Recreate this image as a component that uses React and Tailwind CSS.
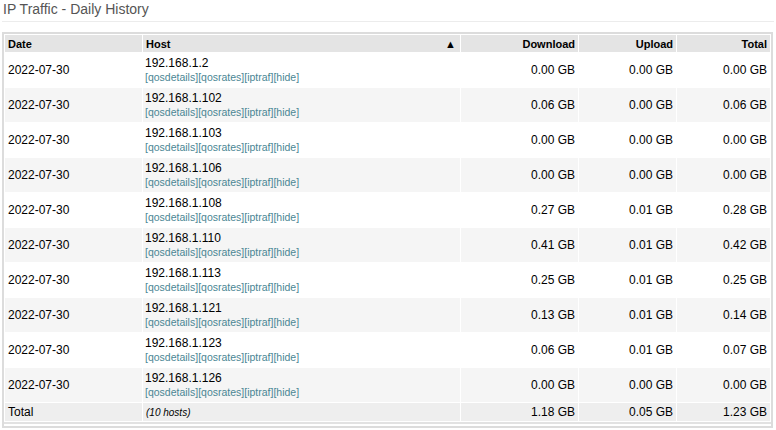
import React from 'react';

const rows = [
  { date: '2022-07-30', host: '192.168.1.2', down: '0.00 GB', up: '0.00 GB', total: '0.00 GB' },
  { date: '2022-07-30', host: '192.168.1.102', down: '0.06 GB', up: '0.00 GB', total: '0.06 GB' },
  { date: '2022-07-30', host: '192.168.1.103', down: '0.00 GB', up: '0.00 GB', total: '0.00 GB' },
  { date: '2022-07-30', host: '192.168.1.106', down: '0.00 GB', up: '0.00 GB', total: '0.00 GB' },
  { date: '2022-07-30', host: '192.168.1.108', down: '0.27 GB', up: '0.01 GB', total: '0.28 GB' },
  { date: '2022-07-30', host: '192.168.1.110', down: '0.41 GB', up: '0.01 GB', total: '0.42 GB' },
  { date: '2022-07-30', host: '192.168.1.113', down: '0.25 GB', up: '0.01 GB', total: '0.25 GB' },
  { date: '2022-07-30', host: '192.168.1.121', down: '0.13 GB', up: '0.01 GB', total: '0.14 GB' },
  { date: '2022-07-30', host: '192.168.1.123', down: '0.06 GB', up: '0.01 GB', total: '0.07 GB' },
  { date: '2022-07-30', host: '192.168.1.126', down: '0.00 GB', up: '0.00 GB', total: '0.00 GB' },
];

const links = ['qosdetails', 'qosrates', 'iptraf', 'hide'];

export default function App() {
  return (
    <div className="w-[776px] h-[430px] bg-white font-['Liberation_Sans',Arial,sans-serif] text-black overflow-hidden">
      {/* title */}
      <div className="h-[22px] mx-[2px] border-b border-[#ececec] px-[1px] text-[14px] leading-[19px] text-[#555]">
        IP Traffic - Daily History
      </div>

      {/* table frame */}
      <div className="mt-[10px] ml-[2px] mr-[3px] border-2 border-[#dcdcdc] pb-[2px]">
        <table className="w-full table-fixed border-separate border-spacing-[1px] text-[12px] border-b-2 border-[#e2e2e2]">
          <colgroup>
            <col className="w-[137px]" />
            <col className="w-[317px]" />
            <col className="w-[117px]" />
            <col className="w-[97px]" />
            <col className="w-[93px]" />
          </colgroup>
          <thead>
            <tr className="bg-[#e4e4e4] text-[11px] font-bold h-[17px]">
              <th className="text-left px-[3px] leading-[16px] pt-[1px]">Date</th>
              <th className="text-left px-[3px] leading-[16px] pt-[1px]">
                <div className="flex items-center justify-between">
                  <span>Host</span>
                  <span className="text-[11px] leading-[11px] mr-[1px]">▲</span>
                </div>
              </th>
              <th className="text-right px-[3px] leading-[16px] pt-[1px]">Download</th>
              <th className="text-right px-[3px] leading-[16px] pt-[1px]">Upload</th>
              <th className="text-right px-[3px] leading-[16px] pt-[1px]">Total</th>
            </tr>
          </thead>
          <tbody>
            {rows.map((r, i) => (
              <tr key={r.host} className={i % 2 === 1 ? 'bg-[#f5f5f5] h-[34px]' : 'bg-white h-[34px]'}>
                <td className="px-[3px] align-middle">{r.date}</td>
                <td className="px-[2px] align-top pt-[3px]">
                  <div className="text-[12px] leading-[14px]">{r.host}</div>
                  <div className="text-[10.5px] leading-[15px] text-[#4a8694]">
                    {links.map((l) => (
                      <span key={l}>[{l}]</span>
                    ))}
                  </div>
                </td>
                <td className="px-[3px] text-right align-middle">{r.down}</td>
                <td className="px-[3px] text-right align-middle">{r.up}</td>
                <td className="px-[3px] text-right align-middle">{r.total}</td>
              </tr>
            ))}
            <tr className="bg-[#eeeeee] h-[18px]">
              <td className="px-[3px]">Total</td>
              <td className="px-[3px] italic text-[10px]">(10 hosts)</td>
              <td className="px-[3px] text-right">1.18 GB</td>
              <td className="px-[3px] text-right">0.05 GB</td>
              <td className="px-[3px] text-right">1.23 GB</td>
            </tr>
          </tbody>
        </table>
      </div>
    </div>
  );
}
